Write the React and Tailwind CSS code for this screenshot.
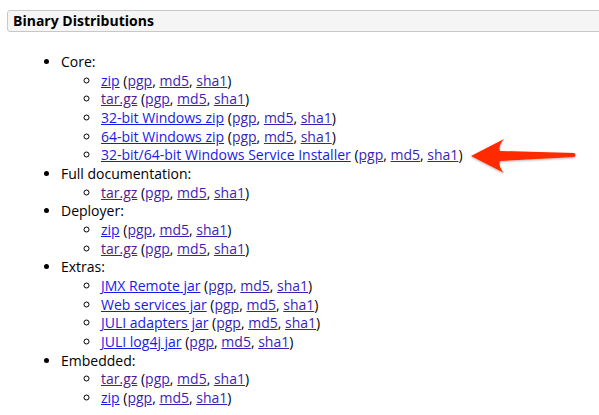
const sums = (
  <>
    {" ("}
    <a href="#" className="text-[#3b1fb5] underline">pgp</a>,{" "}
    <a href="#" className="text-[#3b1fb5] underline">md5</a>,{" "}
    <a href="#" className="text-[#3b1fb5] underline">sha1</a>)
  </>
);

const groups = [
  {
    name: "Core:",
    files: ["zip", "tar.gz", "32-bit Windows zip", "64-bit Windows zip", "32-bit/64-bit Windows Service Installer"],
  },
  { name: "Full documentation:", files: ["tar.gz"] },
  { name: "Deployer:", files: ["zip", "tar.gz"] },
  { name: "Extras:", files: ["JMX Remote jar", "Web services jar", "JULI adapters jar", "JULI log4j jar"] },
  { name: "Embedded:", files: ["tar.gz", "zip"] },
];

function Arrow() {
  return (
    <svg className="absolute left-[460px] top-[130px]" width="130" height="50" viewBox="460 130 130 50">
      <defs>
        <filter id="sh" x="-10%" y="-20%" width="120%" height="160%">
          <feDropShadow dx="0" dy="1" stdDeviation="1" floodColor="#000" floodOpacity="0.3" />
        </filter>
      </defs>
      <path
        d="M471,156 L504,139 Q498,146 500,151 L574,153 Q577,155 574,157 L500,161 Q498,166 504,173 Z"
        fill="#ff2a00"
        filter="url(#sh)"
      />
    </svg>
  );
}

export default function App() {
  return (
    <div className="relative w-[599px] h-[415px] overflow-hidden bg-white text-[14px] text-black" style={{ fontFamily: '"Open Sans", sans-serif' }}>
      <div className="pt-[10px] pl-[7px]">
        <div className="h-[22px] border border-[#c8c8c8] rounded-[3px] bg-[#f5f5f5] pl-[5px] font-bold leading-[20px] w-[600px]">
          Binary Distributions
        </div>
      </div>
      <ul className="list-disc pl-[61px] mt-[21px] leading-[18.67px]">
        {groups.map((g) => (
          <li key={g.name}>
            {g.name}
            <ul className="list-[circle] pl-[40px]">
              {g.files.map((f, i) => (
                <li key={i}>
                  <a href="#" className={(f === "tar.gz" ? "text-[#551a8b]" : "text-[#1a1ae6]") + " underline"}>
                    {f}
                  </a>
                  {sums}
                </li>
              ))}
            </ul>
          </li>
        ))}
      </ul>
      <Arrow />
    </div>
  );
}
